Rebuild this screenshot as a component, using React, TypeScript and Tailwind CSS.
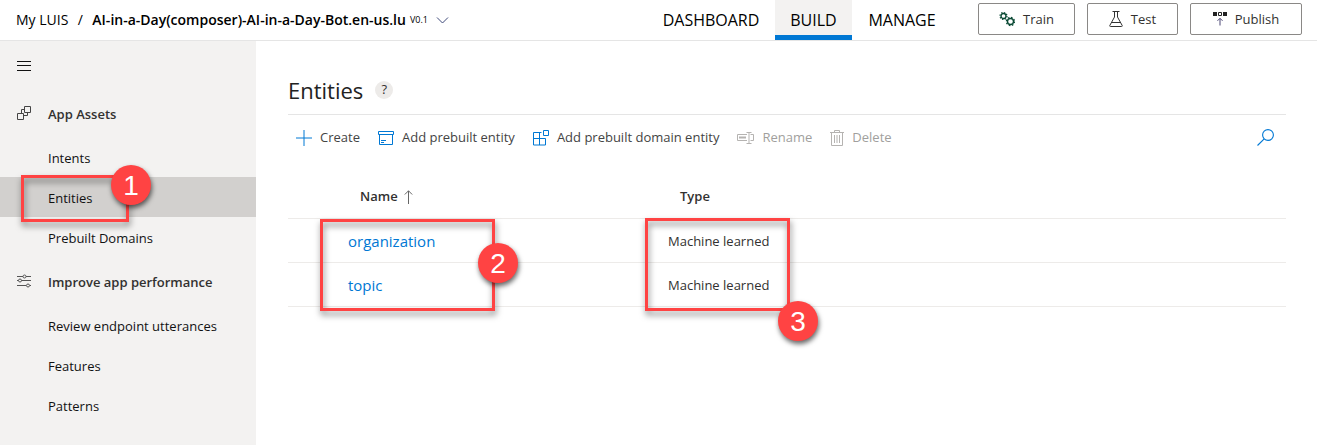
import type { ReactNode } from "react";

function Chevron() {
  return (
    <svg width="13" height="14" viewBox="0 0 13 14" fill="none" stroke="#3f4a7a" strokeWidth="1">
      <path d="M1 4.500 6.500 10 12 4.500" />
    </svg>
  );
}

function Hamburger() {
  return (
    <svg width="14" height="14" viewBox="0 0 14 14" fill="none" stroke="#111" strokeWidth="1" shapeRendering="crispEdges">
      <path d="M0 2.500h14M0 6.500h14M0 11.500h14" />
    </svg>
  );
}

function AssetsIcon() {
  return (
    <svg width="14" height="14" viewBox="0 0 14 14" fill="none" stroke="#444" strokeWidth="1">
      <path d="M.5 7.500h6v6h-6zM4.500 7.500v-4h3M10.500 6.500v3h-4M7.500 .5h6v6h-6z" />
    </svg>
  );
}

function SlidersIcon() {
  return (
    <svg width="14" height="14" viewBox="0 0 14 14" fill="none" stroke="#555" strokeWidth="1">
      <path d="M0 2.500h6M9 2.500h5M0 6.500h1.500M4.500 6.500H14M0 11.500h9M13 11.500h1" />
      <circle cx="7.500" cy="2.500" r="1.500" />
      <circle cx="3" cy="6.500" r="1.500" />
      <circle cx="11" cy="11.500" r="1.500" />
    </svg>
  );
}

function GearsIcon() {
  return (
    <svg width="16" height="16" viewBox="0 0 16 16" fill="none" stroke="#0b4a35">
      <circle cx="4.500" cy="5" r="2.500" strokeWidth="1.300" />
      <circle cx="4.500" cy="5" r="3.500" strokeWidth="1.200" strokeDasharray="1.370 1.370" />
      <circle cx="11.500" cy="10.500" r="3" strokeWidth="1.400" />
      <circle cx="11.500" cy="10.500" r="4.100" strokeWidth="1.200" strokeDasharray="1.610 1.610" />
    </svg>
  );
}

function FlaskIcon() {
  return (
    <svg width="14" height="16" viewBox="0 0 14 16" fill="none" stroke="#333" strokeWidth="1">
      <path d="M3.500 .5h7M5.500 .5v5.500L.8 14.500q-.3 1 .7 1h11q1 0 .7-1L8.500 6V.5M2.500 11.500h9" />
    </svg>
  );
}

function PublishIcon() {
  return (
    <svg width="14" height="14" viewBox="0 0 14 14" fill="none">
      <path d="M0 0h4v4H0zM10 0h4v4h-4z" fill="#222" />
      <path d="M5.500 .5h3v3h-3z" stroke="#222" />
      <path d="M7 13.500V6.500M4.500 8.800 7 6.300l2.500 2.500" stroke="#4b4675" />
    </svg>
  );
}

function PlusIcon() {
  return (
    <svg width="16" height="16" viewBox="0 0 16 16" stroke="#0078d4" strokeWidth="1">
      <path d="M8 0v16M0 8h16" />
    </svg>
  );
}

function ArchiveIcon() {
  return (
    <svg width="16" height="14" viewBox="0 0 16 14" fill="none" stroke="#0078d4" strokeWidth="1">
      <path d="M.5 .5h15v3H.5zM1.500 3.500v10h13v-10M3 9.500h5M3 11.500h3" />
    </svg>
  );
}

function DomainIcon() {
  return (
    <svg width="16" height="16" viewBox="0 0 16 16" fill="none" stroke="#0078d4" strokeWidth="1">
      <path d="M8.500 2.500h-8v12.500h12V8.500H.5M6.500 2.500V15M10.500 .5h5v5h-5z" />
    </svg>
  );
}

function RenameIcon() {
  return (
    <svg width="17" height="12" viewBox="0 0 17 12" fill="none" stroke="#b5b3b1" strokeWidth="1">
      <path d="M10 2.500H.5v6H10M13.500 2.500h3v6h-3M12 .5v11M9.500 .5h5M9.500 11.500h5" />
      <path d="M2 5.500h7" strokeWidth="2" />
    </svg>
  );
}

function TrashIcon() {
  return (
    <svg width="14" height="16" viewBox="0 0 14 16" fill="none" stroke="#b5b3b1" strokeWidth="1">
      <path d="M0 2.500h14M4.500 2.500v-2h5v2M1.500 2.500v13h11v-13M4.500 5v8M7 5v8M9.500 5v8" />
    </svg>
  );
}

function SearchIcon() {
  return (
    <svg width="17" height="17" viewBox="0 0 17 17" fill="none" stroke="#0078d4" strokeWidth="1.100">
      <circle cx="11" cy="6" r="5.400" />
      <path d="M7.200 9.800.5 16.500" />
    </svg>
  );
}

function ArrowUp() {
  return (
    <svg width="9" height="14" viewBox="0 0 9 14" fill="none" stroke="#666" strokeWidth="1">
      <path d="M4.500 14V.8M.8 4.500 4.500 .8l3.700 3.700" />
    </svg>
  );
}

function Outline({ place }: { place: string }) {
  return <div className={`pointer-events-none absolute border-3 border-[#ff4343] drop-shadow-[1px_4px_3px_rgba(0,0,0,0.5)] ${place}`} />;
}

function Marker({ n, place }: { n: number; place: string }) {
  return (
    <div
      className={`pointer-events-none absolute z-10 flex size-10 items-center justify-center rounded-full bg-[#ff4343] pt-0.5 font-['Liberation_Sans',sans-serif] text-[28px] leading-none text-white shadow-[1px_3px_5px_rgba(0,0,0,0.6)] ${place}`}
    >
      {n}
    </div>
  );
}

function NavLink({ label, active, children }: { label: string; active?: boolean; children?: ReactNode }) {
  return (
    <li className="relative">
      <a
        href="#"
        aria-current={active ? "page" : undefined}
        className={`flex h-10 items-center pt-1 pl-12 text-[13px] text-[#111] ${active ? "bg-[#d2d0ce]" : ""}`}
      >
        {label}
      </a>
      {children}
    </li>
  );
}

function NavGroup({ icon, title, children }: { icon: ReactNode; title: string; children: ReactNode }) {
  return (
    <section>
      <h2 className="flex h-12 items-center gap-[17px] pl-[17px] text-[13px] font-semibold text-[#323130]">
        {icon}
        <span className="pt-1">{title}</span>
      </h2>
      <ul>{children}</ul>
    </section>
  );
}

function Tab({ label, width, active }: { label: string; width: string; active?: boolean }) {
  return (
    <a
      href="#"
      className={`flex h-10 items-center justify-center border-b-5 pt-1 text-base text-black ${width} ${
        active ? "border-[#0078d4] bg-[#f3f2f1]" : "border-transparent"
      }`}
    >
      {label}
    </a>
  );
}

function HeaderButton({ icon, label, width }: { icon: ReactNode; label: string; width: string }) {
  return (
    <button
      type="button"
      className={`flex h-8 items-center justify-center gap-2 rounded-xs border border-[#8a8886] text-[13px] text-[#323130] ${width}`}
    >
      {icon}
      <span className="pt-0.5">{label}</span>
    </button>
  );
}

function Command({ icon, label, disabled }: { icon: ReactNode; label: string; disabled?: boolean }) {
  return (
    <button type="button" disabled={disabled} className="flex items-center gap-2 text-[13px] text-[#444] disabled:text-[#a19f9d]">
      {icon}
      {label}
    </button>
  );
}

const entities = [
  { name: "organization", type: "Machine learned" },
  { name: "topic", type: "Machine learned" },
];

export default function App() {
  return (
    <div className="flex min-h-screen flex-col bg-white font-['Open_Sans',sans-serif] text-[#323130]">
      <header className="flex h-[41px] items-start border-b border-[#e5e5e5] pr-[15px] pl-4">
        <div className="flex h-10 items-center whitespace-nowrap text-black">
          <a href="#" className="text-sm">My LUIS</a>
          <span className="w-6 text-center text-sm">/</span>
          <span className="text-sm font-semibold">AI-in-a-Day(composer)-AI-in-a-Day-Bot.en-us.lu</span>
          <button type="button" aria-label="Version V0.1" className="ml-1 flex items-center gap-2 text-[9px]">
            V0.1
            <Chevron />
          </button>
        </div>
        <nav className="ml-auto flex">
          <Tab label="DASHBOARD" width="w-32" />
          <Tab label="BUILD" width="w-[77px]" active />
          <Tab label="MANAGE" width="w-[100px]" />
        </nav>
        <div className="ml-[26px] flex gap-3 pt-[3px]">
          <HeaderButton icon={<GearsIcon />} label="Train" width="w-[97px]" />
          <HeaderButton icon={<FlaskIcon />} label="Test" width="w-[91px]" />
          <HeaderButton icon={<PublishIcon />} label="Publish" width="w-28" />
        </div>
      </header>
      <div className="flex flex-1">
        <aside className="w-64 shrink-0 bg-[#f3f2f1]">
          <button type="button" aria-label="Toggle navigation" className="flex h-12 items-center pt-0.5 pl-[17px]">
            <Hamburger />
          </button>
          <NavGroup icon={<AssetsIcon />} title="App Assets">
            <NavLink label="Intents" />
            <NavLink label="Entities" active>
              <Outline place="-top-0.5 left-[21px] h-[47px] w-27" />
              <Marker n={1} place="-top-3 left-[111px]" />
            </NavLink>
            <NavLink label="Prebuilt Domains" />
          </NavGroup>
          <NavGroup icon={<SlidersIcon />} title="Improve app performance">
            <NavLink label="Review endpoint utterances" />
            <NavLink label="Features" />
            <NavLink label="Patterns" />
          </NavGroup>
        </aside>
        <main className="flex-1 pr-[31px] pl-8">
          <div className="flex h-[74px] items-end gap-3 border-b border-[#e5e5e5] pb-2">
            <h1 className="text-[22px] leading-8 text-[#222]">Entities</h1>
            <button type="button" aria-label="Help" className="mb-[7px] flex size-[18px] items-center justify-center rounded-full bg-[#edebe9] text-[13px]">
              ?
            </button>
          </div>
          <div className="flex h-[45px] items-center gap-[18px] pr-3 pl-2">
            <Command icon={<PlusIcon />} label="Create" />
            <Command icon={<ArchiveIcon />} label="Add prebuilt entity" />
            <Command icon={<DomainIcon />} label="Add prebuilt domain entity" />
            <Command icon={<RenameIcon />} label="Rename" disabled />
            <Command icon={<TrashIcon />} label="Delete" disabled />
            <button type="button" aria-label="Search" className="ml-auto">
              <SearchIcon />
            </button>
          </div>
          <div className="relative pt-[14px]">
            <table className="w-full table-fixed border-collapse text-left text-[13px]">
              <thead>
                <tr className="h-11 border-b border-[#edebe9]">
                  <th className="w-[368px] pt-0.5 pl-[72px] font-semibold">
                    <span className="flex items-center gap-1.5">
                      Name
                      <ArrowUp />
                    </span>
                  </th>
                  <th className="pt-0.5 pl-6 font-semibold">Type</th>
                </tr>
              </thead>
              <tbody>
                {entities.map((e) => (
                  <tr key={e.name} className="h-11 border-b border-[#edebe9]">
                    <td className="pt-0.5 pl-[60px]">
                      <a href="#" className="text-[15px] text-[#0078d4]">{e.name}</a>
                    </td>
                    <td className="pt-1 pl-3">{e.type}</td>
                  </tr>
                ))}
              </tbody>
            </table>
            <Outline place="top-[59px] left-8 h-23 w-[175px]" />
            <Marker n={2} place="top-[83px] left-[190px]" />
            <Outline place="top-[58px] left-[357px] h-[93px] w-[145px]" />
            <Marker n={3} place="top-[141px] left-[490px]" />
          </div>
        </main>
      </div>
    </div>
  );
}
